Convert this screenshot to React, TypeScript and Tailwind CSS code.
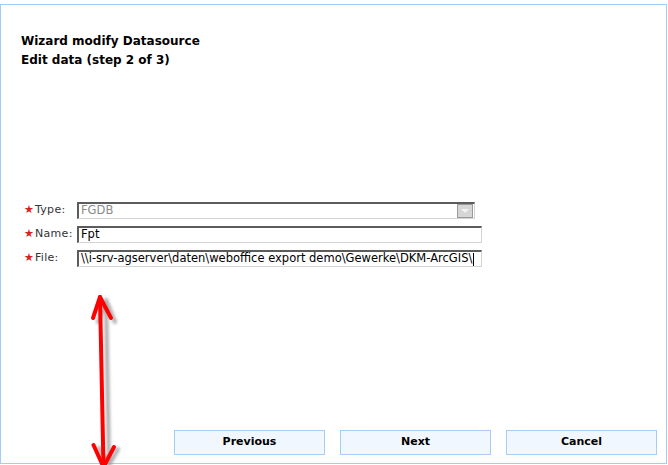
import React from 'react';

const font = { fontFamily: '"DejaVu Sans", Verdana, sans-serif' };

function Label({ text }: { text: string }) {
  return (
    <div className="flex w-[76px] shrink-0 items-center pl-[23px] text-[11px] tracking-[0.3px] text-[#333]">
      <span className="w-[11px] text-[11px] text-[#e02020]">★</span>
      <span>{text}</span>
    </div>
  );
}

function Field({ children, width }: { children: React.ReactNode; width: string }) {
  return (
    <div
      className={`${width} relative flex h-[17px] items-center overflow-hidden border-l-2 border-t-2 border-b border-r border-l-[#5c5c5c] border-t-[#5c5c5c] border-b-[#d4d4d4] border-r-[#d4d4d4] bg-white pl-[2px] text-[11.5px] text-black`}
    >
      {children}
    </div>
  );
}

function Button({ label }: { label: string }) {
  return (
    <button className="flex h-[25px] w-[151px] items-center justify-center border border-[#a6cdf5] bg-[#f1f7fe] text-[11px] font-bold text-black">
      {label}
    </button>
  );
}

export default function App() {
  return (
    <div className="h-[465px] w-[668px] bg-white pt-[4px]" style={font}>
      <div className="relative flex h-[460px] w-[667px] flex-col border border-[#a3cdf7]">
        <div className="pl-[20px] pt-[27px] text-[12px] font-bold leading-[19px] text-black">
          <div>Wizard modify Datasource</div>
          <div>Edit data (step 2 of 3)</div>
        </div>

        <div className="mt-[132px] flex flex-col gap-[7px]">
          <div className="flex items-center">
            <Label text="Type:" />
            <Field width="w-[398px]">
              <span className="text-[#8a8a8a]">FGDB</span>
              <div className="absolute right-[1px] top-[0px] flex h-[14px] w-[16px] items-center justify-center border border-[#9a9a9a] bg-[#d6d6d6]">
                <svg width="8" height="5" viewBox="0 0 8 5">
                  <path d="M0 0 L8 0 L4 4 Z" fill="#f2f2f2" />
                </svg>
              </div>
            </Field>
          </div>
          <div className="flex items-center">
            <Label text="Name:" />
            <Field width="w-[405px]">
              <span>Fpt</span>
            </Field>
          </div>
          <div className="flex items-center">
            <Label text="File:" />
            <Field width="w-[405px]">
              <span className="whitespace-nowrap">{'\\\\i-srv-agserver\\daten\\weboffice export demo\\Gewerke\\DKM-ArcGIS\\'}</span>
              <span className="ml-[1px] inline-block h-[13px] w-[1px] bg-black" />
            </Field>
          </div>
        </div>

        <div className="mt-auto flex justify-end gap-[15px] pb-[8px] pr-[9px]">
          <Button label="Previous" />
          <Button label="Next" />
          <Button label="Cancel" />
        </div>

        <svg
          className="pointer-events-none absolute left-[86px] top-[282px]"
          width="36"
          height="184"
          viewBox="0 0 36 184"
        >
          <defs>
            <filter id="sh" x="-50%" y="-10%" width="200%" height="120%">
              <feGaussianBlur stdDeviation="1.6" />
            </filter>
          </defs>
          <g stroke="#9a9a9a" strokeWidth="4" fill="none" strokeLinecap="round" strokeLinejoin="round" filter="url(#sh)" opacity="0.8">
            <path d="M19 13 L22 178" />
            <path d="M11 35 L19 13 L28 35" />
            <path d="M12 161 L22 178 L31 162" />
          </g>
          <g stroke="#ff0000" strokeWidth="4" fill="none" strokeLinecap="round" strokeLinejoin="round">
            <path d="M13 10 L16.5 180" />
            <path d="M6 31 L13 10 L24 31" />
            <path d="M6.5 158 L16.5 180 L27 160" />
          </g>
        </svg>
      </div>
    </div>
  );
}
